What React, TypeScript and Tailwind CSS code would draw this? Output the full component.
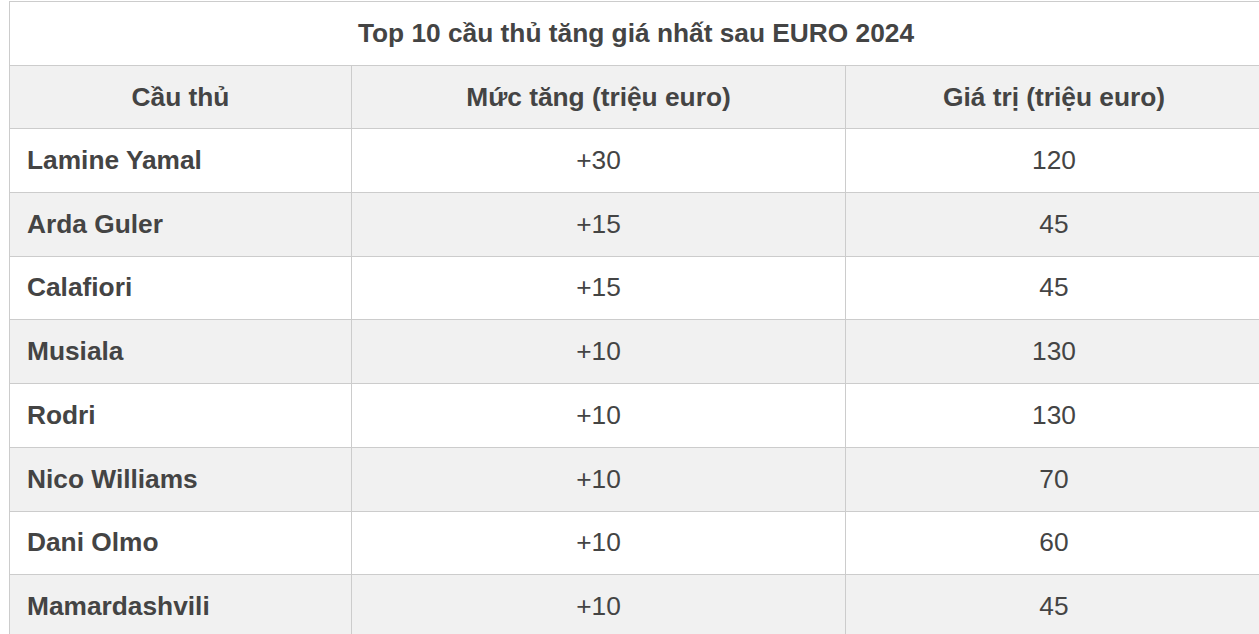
const rows = [
  ['Lamine Yamal', '+30', '120', 'h-[64px] bg-white'],
  ['Arda Guler', '+15', '45', 'h-[64px] bg-[#f1f1f1]'],
  ['Calafiori', '+15', '45', 'h-[63px] bg-white'],
  ['Musiala', '+10', '130', 'h-[64px] bg-[#f1f1f1]'],
  ['Rodri', '+10', '130', 'h-[64px] bg-white'],
  ['Nico Williams', '+10', '70', 'h-[64px] bg-[#f1f1f1]'],
  ['Dani Olmo', '+10', '60', 'h-[63px] bg-white'],
  ['Mamardashvili', '+10', '45', 'h-[64px] bg-[#f1f1f1]'],
];

export default function App() {
  return (
    <div className="min-h-screen bg-white pt-[1px] pl-[9px] font-['Liberation_Sans',Arial,sans-serif] text-[#444] overflow-hidden">
      <table className="w-[1254px] border-collapse table-fixed text-[26.3px] leading-[30px]">
        <colgroup>
          <col className="w-[342px]" />
          <col className="w-[494px]" />
          <col />
        </colgroup>
        <thead>
          <tr className="h-[64px] bg-white">
            <th colSpan={3} className="border border-[#ccc] text-center font-bold pb-[2px]">
              Top 10 cầu thủ tăng giá nhất sau EURO 2024
            </th>
          </tr>
          <tr className="h-[63px] bg-[#f1f1f1]">
            <th className="border border-[#ccc] text-center font-bold">Cầu thủ</th>
            <th className="border border-[#ccc] text-center font-bold">Mức tăng (triệu euro)</th>
            <th className="border border-[#ccc] text-center font-bold">Giá trị (triệu euro)</th>
          </tr>
        </thead>
        <tbody>
          {rows.map((r) => (
            <tr key={r[0]} className={r[3]}>
              <td className="border border-[#ccc] px-[17px] pb-[2px] font-bold">{r[0]}</td>
              <td className="border border-[#ccc] pb-[2px] text-center">{r[1]}</td>
              <td className="border border-[#ccc] pb-[2px] text-center">{r[2]}</td>
            </tr>
          ))}
        </tbody>
      </table>
    </div>
  );
}
